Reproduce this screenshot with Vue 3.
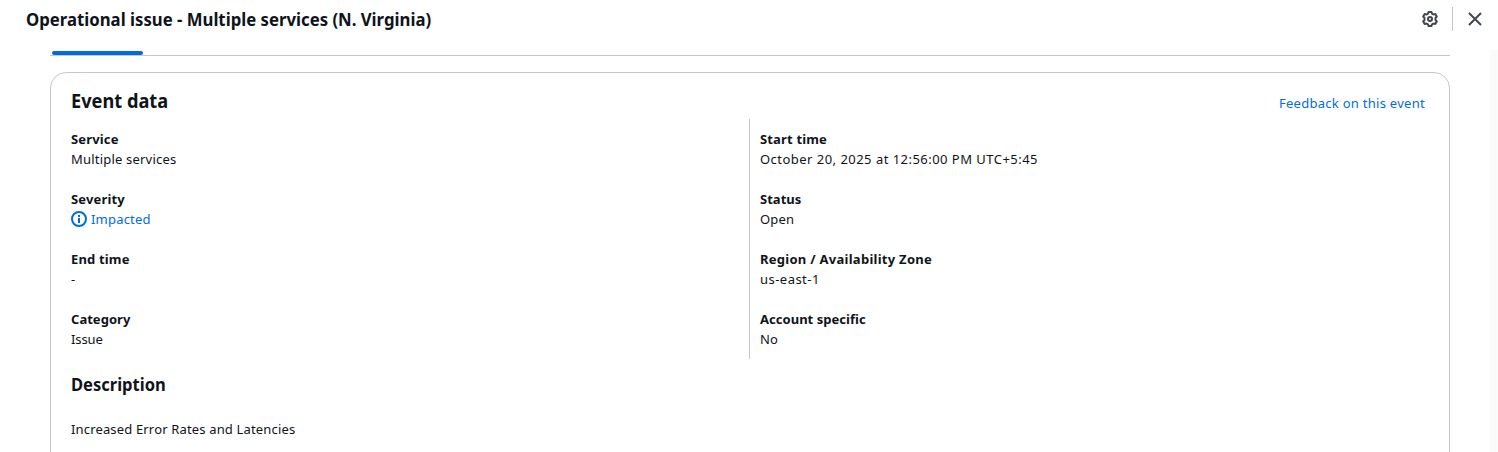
<script setup>
const columns = [
  [
    { label: 'Service', value: 'Multiple services' },
    { label: 'Severity', value: 'Impacted', info: true },
    { label: 'End time', value: '-' },
    { label: 'Category', value: 'Issue', tightLabel: true, tight: true },
  ],
  [
    { label: 'Start time', value: 'October 20, 2025 at 12:56:00 PM UTC+5:45', wide: true },
    { label: 'Status', value: 'Open', tightLabel: true },
    { label: 'Region / Availability Zone', value: 'us-east-1', wideLabel: true, wide: true },
    { label: 'Account specific', value: 'No', tightLabel: true },
  ],
]
</script>

<template>
  <div class="panel">
    <header class="bar">
      <h2 class="title">Operational issue - Multiple services (N. Virginia)</h2>
      <div class="actions">
        <button class="icon-button" aria-label="Settings">
          <svg width="16" height="16" viewBox="0 0 16 16" fill="none" stroke="currentColor" stroke-width="2" stroke-linejoin="round">
            <path d="M6 2.700 6.500 1h3l.5 1.700 1.400.8 1.900-.5 1.500 2.500L13.500 7v2l1.300 1.500-1.500 2.500-1.900-.5-1.400.8-.5 1.700h-3L6 13.300l-1.400-.8-1.900.5-1.500-2.500L2.500 9V7L1.200 5.500 2.700 3l1.900.5z" />
            <circle cx="8" cy="8" r="2" />
          </svg>
        </button>
        <span class="separator"></span>
        <button class="icon-button" aria-label="Close">
          <svg width="16" height="16" viewBox="0 0 16 16" fill="none" stroke="currentColor" stroke-width="2">
            <path d="m2 2 12 12M14 2 2 14" />
          </svg>
        </button>
      </div>
    </header>

    <div class="body">
      <main class="content">
        <div class="tabs"><span class="active-tab"></span></div>
        <section class="card">
          <div class="card-header">
            <h3 class="heading">Event data</h3>
            <a class="link">Feedback on this event</a>
          </div>
          <div class="columns">
            <dl v-for="(items, c) in columns" :key="c" class="column">
              <div v-for="item in items" :key="item.label" class="pair">
                <dt :class="{ tight: item.tightLabel, roomy: item.wideLabel }">{{ item.label }}</dt>
                <dd :class="{ info: item.info, wide: item.wide, narrow: item.tight }">
                  <svg v-if="item.info" width="16" height="16" viewBox="0 0 16 16" fill="none" stroke="currentColor" stroke-width="2">
                    <circle cx="8" cy="8" r="7" />
                    <path d="M8 12V7M8 4v2" />
                  </svg>
                  <span>{{ item.value }}</span>
                </dd>
              </div>
            </dl>
          </div>
          <h4 class="subheading">Description</h4>
          <p class="description">Increased Error Rates and Latencies</p>
        </section>
      </main>
      <div class="track"></div>
    </div>
  </div>
</template>

<style>
body {
  background: #fff;
  overflow: hidden;
}
</style>

<style scoped>
.panel {
  box-sizing: border-box;
  height: 452px;
  overflow: hidden;
  display: flex;
  flex-direction: column;
  background: #fff;
  color: #0f141a;
  font: 13px/20px "Noto Sans", "Open Sans", sans-serif;
}
h2, h3, h4, p, dl, dd { margin: 0; }
.bar {
  height: 50px;
  flex: none;
  display: flex;
  justify-content: space-between;
  align-items: flex-start;
  padding: 7px 15px 0 26px;
  box-sizing: border-box;
}
.title, .heading, .subheading {
  width: max-content;
  white-space: nowrap;
  font-weight: 700;
  transform-origin: 0 50%;
}
.title { font-size: 18px; line-height: 24px; transform: scaleX(0.93); }
.actions { display: flex; align-items: center; height: 24px; }
.icon-button {
  border: 0;
  padding: 0;
  background: none;
  color: #424650;
  width: 16px;
  height: 16px;
  display: flex;
}
.separator { width: 1px; height: 24px; background: #c6c6cd; margin: 0 14px; }
.body { flex: 1; min-height: 0; display: flex; justify-content: space-between; padding-left: 50px; }
.content { width: 1400px; flex: none; }
.track { width: 8px; background: #fbfbfb; }
.tabs { height: 4px; border-bottom: 1px solid #c6c6cd; padding: 1px 0 0 2px; }
.active-tab { display: block; width: 91px; height: 4px; border-radius: 2px; background: #006ce0; }
.card {
  margin-top: 16px;
  box-sizing: border-box;
  height: 420px;
  border: 1px solid #c6c6cd;
  border-radius: 16px;
  padding: 16px 24px 0 20px;
}
.card-header { height: 30px; display: flex; justify-content: space-between; }
.heading { font-size: 20px; line-height: 24px; transform: scaleX(0.91); }
.link { color: #006ce0; margin-top: 4px; letter-spacing: 0.28px; }
.columns { display: grid; grid-template-columns: 678px 1fr; }
.column { height: 240px; box-sizing: border-box; padding-top: 10px; display: grid; grid-template-rows: repeat(4, 60px); }
.column + .column { border-left: 1px solid #c6c6cd; padding-left: 10px; }
dt { font-weight: 700; letter-spacing: 0.16px; }
dt.tight { letter-spacing: 0.03px; }
dt.roomy { letter-spacing: 0.27px; }
dd { display: flex; align-items: center; gap: 4px; letter-spacing: 0.2px; }
dd.wide { letter-spacing: 0.47px; }
dd.narrow { letter-spacing: -0.1px; }
.info { color: #006ce0; }
.subheading { font-size: 18px; line-height: 22px; margin-top: 14px; transform: scaleX(0.918); }
.description { margin-top: 24px; letter-spacing: 0.16px; }
</style>
